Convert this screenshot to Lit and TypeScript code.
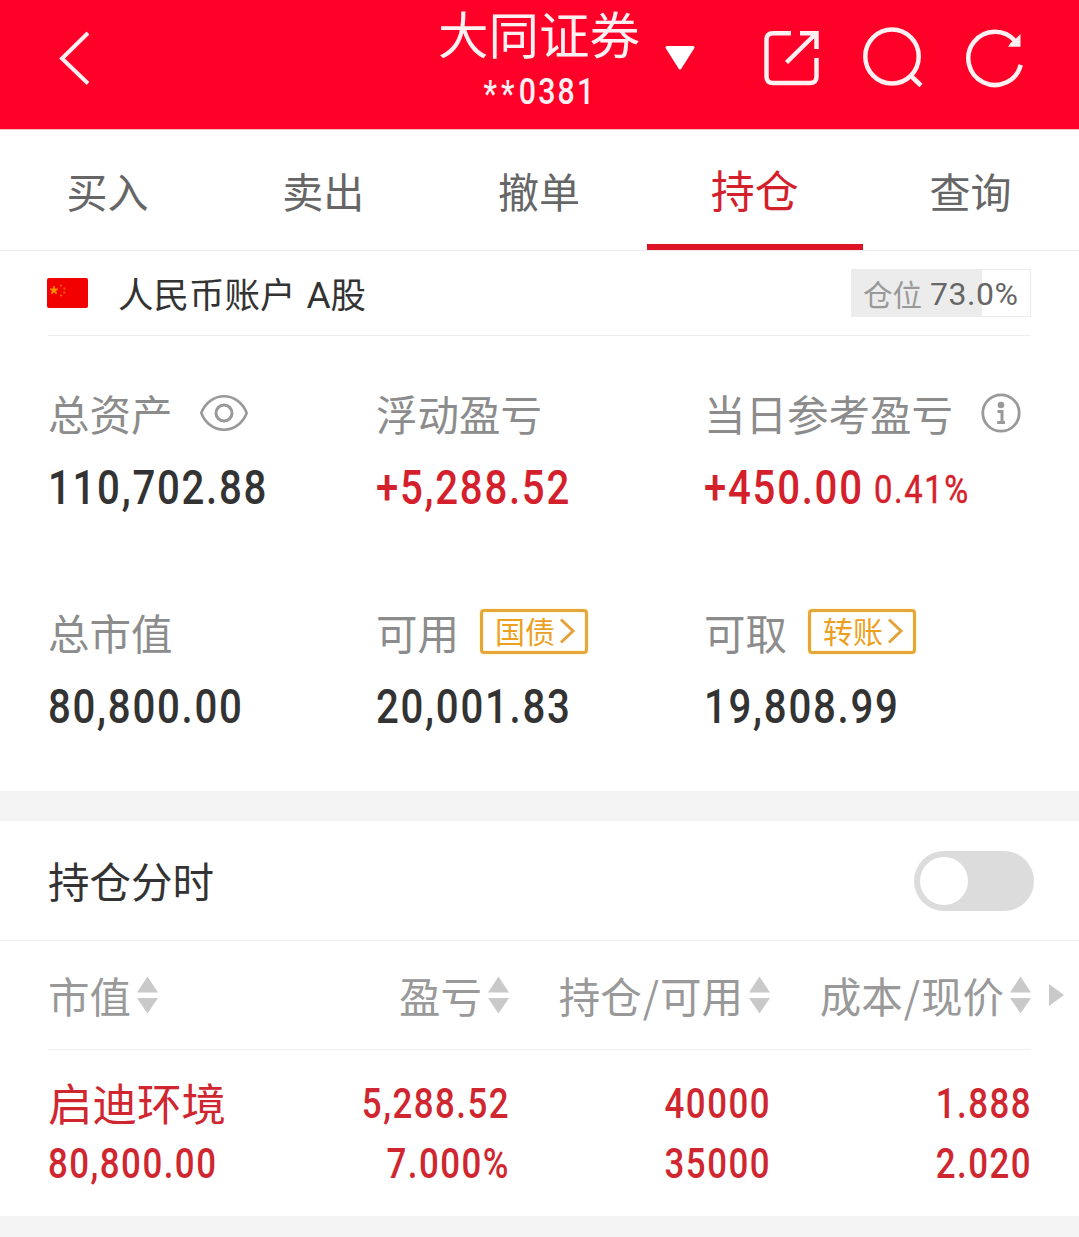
import { LitElement, html, svg, css, nothing } from "lit";
import { customElement, property } from "lit/decorators.js";

type Tone = "dark" | "red";
interface Metric {
  label: string;
  value: string;
  tone: Tone;
  icon?: "eye" | "info";
  action?: string;
  extra?: string;
}

const TABS = ["买入", "卖出", "撤单", "持仓", "查询"];
const ACTIVE_TAB = 3;

const METRICS: Metric[] = [
  { label: "总资产", value: "110,702.88", tone: "dark", icon: "eye" },
  { label: "浮动盈亏", value: "+5,288.52", tone: "red" },
  { label: "当日参考盈亏", value: "+450.00", tone: "red", icon: "info", extra: "0.41%" },
  { label: "总市值", value: "80,800.00", tone: "dark" },
  { label: "可用", value: "20,001.83", tone: "dark", action: "国债" },
  { label: "可取", value: "19,808.99", tone: "dark", action: "转账" },
];

const COLUMNS = ["市值", "盈亏", "持仓/可用", "成本/现价"];

const POSITION = 73.0;

const eyeIcon = html`<svg class="eye" width="50" height="38" viewBox="0 0 50 38" fill="none" stroke="#999" stroke-width="2.6">
  <path d="M2.300 19C6 9 15 2.300 25 2.300S44 9 47.700 19C44 29 35 35.700 25 35.700S6 29 2.300 19Z" stroke-linejoin="round" />
  <circle cx="25" cy="19" r="8" stroke-width="3" />
</svg>`;

const infoIcon = html`<svg class="info" width="40" height="40" viewBox="0 0 40 40" fill="none" stroke="#999" stroke-width="2.800">
  <circle cx="20" cy="20" r="18.200" />
  <circle cx="20" cy="12" r="3.300" fill="#999" stroke="none" />
  <path d="M16.500 18.500H21V29.500M16.200 29.500H24" stroke-width="3" />
</svg>`;

@customElement("sort-arrows")
class SortArrows extends LitElement {
  static styles = css`
    :host { display: block; width: 21px; height: 38px; }
    svg { display: block; }
  `;
  render() {
    return html`<svg width="21" height="38" viewBox="0 0 21 38" fill="#c9c9c9">
      ${svg`<path d="M10.500 0.500L21 16.500H0Z" /><path d="M0 22H21L10.500 37.500Z" />`}
    </svg>`;
  }
}

@customElement("metric-cell")
class MetricCell extends LitElement {
  static styles = css`
    :host { display: block; }
    .label { display: flex; align-items: center; height: 60px; font-size: 41.500px; color: #8c8c8c; white-space: nowrap; }
    .text { line-height: 60px; padding-top: 1px; }
    .eye { margin: 2px 0 0 26px; }
    .info { margin: 2px 0 0 28px; }
    .action {
      box-sizing: border-box; display: flex; align-items: center; width: 108px; height: 45px;
      margin: 1px 0 0 21px; padding-left: 12px; border: 3px solid #e5a73a; border-radius: 4px;
      color: #ec9f20; font-size: 30px; line-height: 40px;
      box-shadow: 0 0 2px #fbe28a, inset 0 0 2px #fbe28a;
    }
    .action span { margin-top: -3px; }
    .action svg { margin: -1px 0 0 4px; }
    .value { display: flex; align-items: center; height: 60px; margin-top: 16px; font-family: Roboto, sans-serif; font-weight: 500; }
    .num { font-size: 49px; line-height: 60px; letter-spacing: 2.100px; transform: scaleX(0.82); transform-origin: 0 50%; white-space: nowrap; }
    .dark { color: #333; }
    .red { color: #d41f2c; }
    .extra { font-size: 39px; line-height: 60px; font-weight: 400; letter-spacing: 1.900px; margin-left: -25px; padding-top: 4px; transform: scaleX(0.84); transform-origin: 0 50%; -webkit-text-stroke: 0.500px #d41f2c; }
  `;
  @property({ attribute: false }) metric!: Metric;
  render() {
    const m = this.metric;
    return html`
      <div class="label">
        <span class="text">${m.label}</span>
        ${m.icon === "eye" ? eyeIcon : m.icon === "info" ? infoIcon : nothing}
        ${m.action
          ? html`<div class="action"><span>${m.action}</span><svg width="17" height="26" viewBox="0 0 17 26" fill="none" stroke="#e5a23a" stroke-width="3"><path d="M2 1.500L14 13L2 24.500" /></svg></div>`
          : nothing}
      </div>
      <div class="value ${m.tone}">
        <span class="num">${m.value}</span>
        ${m.extra ? html`<span class="extra">${m.extra}</span>` : nothing}
      </div>
    `;
  }
}

@customElement("app-root")
class AppRoot extends LitElement {
  static styles = css`
    :host {
      display: block; width: 1079px; height: 1237px; background: #fff;
      font-family: "Noto Sans CJK SC", "Noto Sans", sans-serif; color: #333;
    }
    .header { display: flex; height: 130px; background: #ff0029; color: #fff; border-bottom: 1px solid #f8b8c2; box-sizing: border-box; }
    .back { width: 437px; padding: 31px 0 0 58px; box-sizing: border-box; }
    .back svg, .tools svg { display: block; }
    .title { width: 204px; text-align: center; padding-top: 7px; }
    .broker { font-family: "Liberation Sans", "Noto Sans CJK SC", sans-serif; font-size: 50.500px; line-height: 60px; height: 56px; color: #fff0f2; white-space: nowrap; }
    .acct { display: flex; justify-content: center; font: 500 36.500px/58px Roboto, sans-serif; color: #fff0f2; letter-spacing: 2.700px; transform: translateX(1px) scaleX(0.83); }
    .stars { letter-spacing: 5px; padding-top: 3px; line-height: 55px; }
    .tri { width: 120px; padding: 45px 0 0 23px; box-sizing: border-box; }
    .tools { display: flex; gap: 41px; padding-top: 27px; }
    .tabs { display: grid; grid-template-columns: repeat(5, 1fr); width: 1079px; height: 121px; box-sizing: border-box; border-bottom: 1px solid #ebebeb; }
    .tab { display: flex; justify-content: center; font-size: 41px; line-height: 121px; color: #666; padding-right: 1px; }
    .tab.active { font-size: 44px; line-height: 118px; height: 114px; color: #d41f2c; border-bottom: 6px solid #df1326; }
    .account { display: flex; align-items: center; height: 84px; margin: 0 48px; border-bottom: 1px solid #ededed; }
    .flag { display: block; margin: 0 30px 0 -1px; }
    .name { flex: 1; font-size: 35.500px; line-height: 60px; padding-top: 2px; color: #333; white-space: pre; }
    .latin { font-family: Roboto, sans-serif; font-size: 37px; margin: 0 0 0 3px; }
    .ratio { display: flex; align-items: center; box-sizing: border-box; width: 180px; height: 48px; padding-left: 11px; border: 1px solid #ececec; white-space: nowrap; }
    .ratio .k { font-size: 29.500px; line-height: 46px; color: #999; }
    .ratio .v { font: 400 32px/46px Roboto, sans-serif; color: #666; letter-spacing: 0.500px; margin-left: 8px; padding-top: 2px; }
    .metrics { display: grid; grid-template-columns: 328px 328px 1fr; grid-auto-rows: 134px; row-gap: 85px; box-sizing: border-box; height: 455px; padding: 46px 0 0 48px; }
    .band { height: 30px; background: #f4f4f4; }
    .intraday { display: flex; align-items: center; justify-content: space-between; height: 119px; padding: 0 45px 0 48px; border-bottom: 1px solid #efefef; font-size: 41.500px; line-height: 119px; color: #333; }
    .switch { width: 120px; height: 60px; box-sizing: border-box; padding: 6px; border-radius: 30px; background: #dcdcdc; }
    .knob { width: 48px; height: 48px; border-radius: 50%; background: #fff; }
    .cols { display: grid; grid-template-columns: 201px 260px 261px 261px 1fr; height: 108px; padding-left: 48px; align-items: center; font-size: 41.500px; line-height: 60px; color: #999; white-space: nowrap; }
    .col { display: flex; align-items: center; justify-content: flex-end; gap: 6px; }
    .col:first-child { justify-content: flex-start; }
    .slash { margin: 0 1px; }
    .more { display: block; margin-left: 18px; }
    .line { height: 1px; margin: 0 48px; background: #efefef; }
    .row { display: grid; grid-template-columns: 201px 260px 261px 261px; grid-auto-rows: 60px; height: 166px; padding: 22px 0 0 48px; box-sizing: border-box; color: #cf2630; }
    .stock { font-size: 44.500px; line-height: 60px; white-space: nowrap; }
    .n { font: 500 42.500px/64px Roboto, sans-serif; letter-spacing: 1.800px; text-align: right; transform: translateX(1px) scaleX(0.82); transform-origin: 100% 50%; }
    .n.left { text-align: left; transform: scaleX(0.82); transform-origin: 0 50%; }
    .foot { height: 22px; background: #f4f4f4; }
  `;

  render() {
    return html`
      <div class="header">
        <div class="back">
          <svg width="34" height="54" viewBox="0 0 34 54" fill="none" stroke="#fff0f2" stroke-width="4"><path d="M30 2L4 27.500L30 52.500" /></svg>
        </div>
        <div class="title">
          <div class="broker">大同证券</div>
          <div class="acct"><span class="stars">**</span><span>0381</span></div>
        </div>
        <div class="tri">
          <svg width="32" height="26" viewBox="0 0 32 26"><path d="M3 2.500H29L16 23Z" fill="#fff" stroke="#fff" stroke-width="3" stroke-linejoin="round" /></svg>
        </div>
        <div class="tools">
          <svg width="60" height="62" viewBox="0 0 60 62" fill="none" stroke="#fff0f2" stroke-width="4.500">
            <path d="M30 6.200H12Q5.500 6.200 5.500 12.700V49.500Q5.500 56 12 56H49Q55.500 56 55.500 49.500V31" />
            <path d="M39 6.200H55.500V22M55 6.500L25.500 35.500" />
          </svg>
          <svg width="62" height="62" viewBox="0 0 62 62" fill="none" stroke="#fff0f2" stroke-width="4.500">
            <ellipse cx="30" cy="29.500" rx="26.700" ry="27" /><path d="M48 48L59 58.500" />
          </svg>
          <svg width="60" height="62" viewBox="0 0 60 62" fill="none" stroke="#fff0f2" stroke-width="4.500">
            <path d="M50.300 14.300A26.600 26.600 0 1 0 55.700 37.900" />
            <path d="M55.500 7V19.700H43L45.500 16L49.500 13Z" fill="#fff0f2" stroke="none" />
          </svg>
        </div>
      </div>
      <div class="tabs">
        ${TABS.map((t, i) => html`<div class="tab ${i === ACTIVE_TAB ? "active" : ""}">${t}</div>`)}
      </div>
      <div class="account">
        <svg class="flag" width="41" height="30" viewBox="0 0 41 30">
          <rect width="41" height="30" rx="2" fill="#f20000" />
          <path d="M7 8L8 11H11L8.700 12.800L9.500 15.800L7 14L4.500 15.800L5.300 12.800L3 11H6Z" fill="#ff9a00" stroke="#ff7a00" stroke-width="1" />
          <g fill="#f96a00"><circle cx="14" cy="7.500" r="1.100" /><circle cx="17.300" cy="10.500" r="1.100" /><circle cx="17.300" cy="14.500" r="1.100" /><circle cx="14" cy="17.500" r="1.100" /></g>
        </svg>
        <div class="name">人民币账户 <span class="latin">A</span>股</div>
        <div class="ratio" style="background: linear-gradient(to right, #ececec ${POSITION}%, #fff ${POSITION}%)">
          <span class="k">仓位</span><span class="v">${POSITION.toFixed(1)}%</span>
        </div>
      </div>
      <div class="metrics">${METRICS.map((m) => html`<metric-cell .metric=${m}></metric-cell>`)}</div>
      <div class="band"></div>
      <div class="intraday"><span>持仓分时</span><div class="switch"><div class="knob"></div></div></div>
      <div class="cols">
        ${COLUMNS.map((c) => {
          const [a, b] = c.split("/");
          return html`<div class="col"><span>${a}${b ? html`<span class="slash">/</span>${b}` : nothing}</span><sort-arrows></sort-arrows></div>`;
        })}
        <svg class="more" width="15" height="22" viewBox="0 0 15 22"><path d="M0 0L15 11L0 22Z" fill="#c9c9c9" /></svg>
      </div>
      <div class="line"></div>
      <div class="row">
        <div class="stock">启迪环境</div><div class="n">5,288.52</div><div class="n">40000</div><div class="n">1.888</div>
        <div class="n left">80,800.00</div><div class="n">7.000%</div><div class="n">35000</div><div class="n">2.020</div>
      </div>
      <div class="foot"></div>
    `;
  }
}
